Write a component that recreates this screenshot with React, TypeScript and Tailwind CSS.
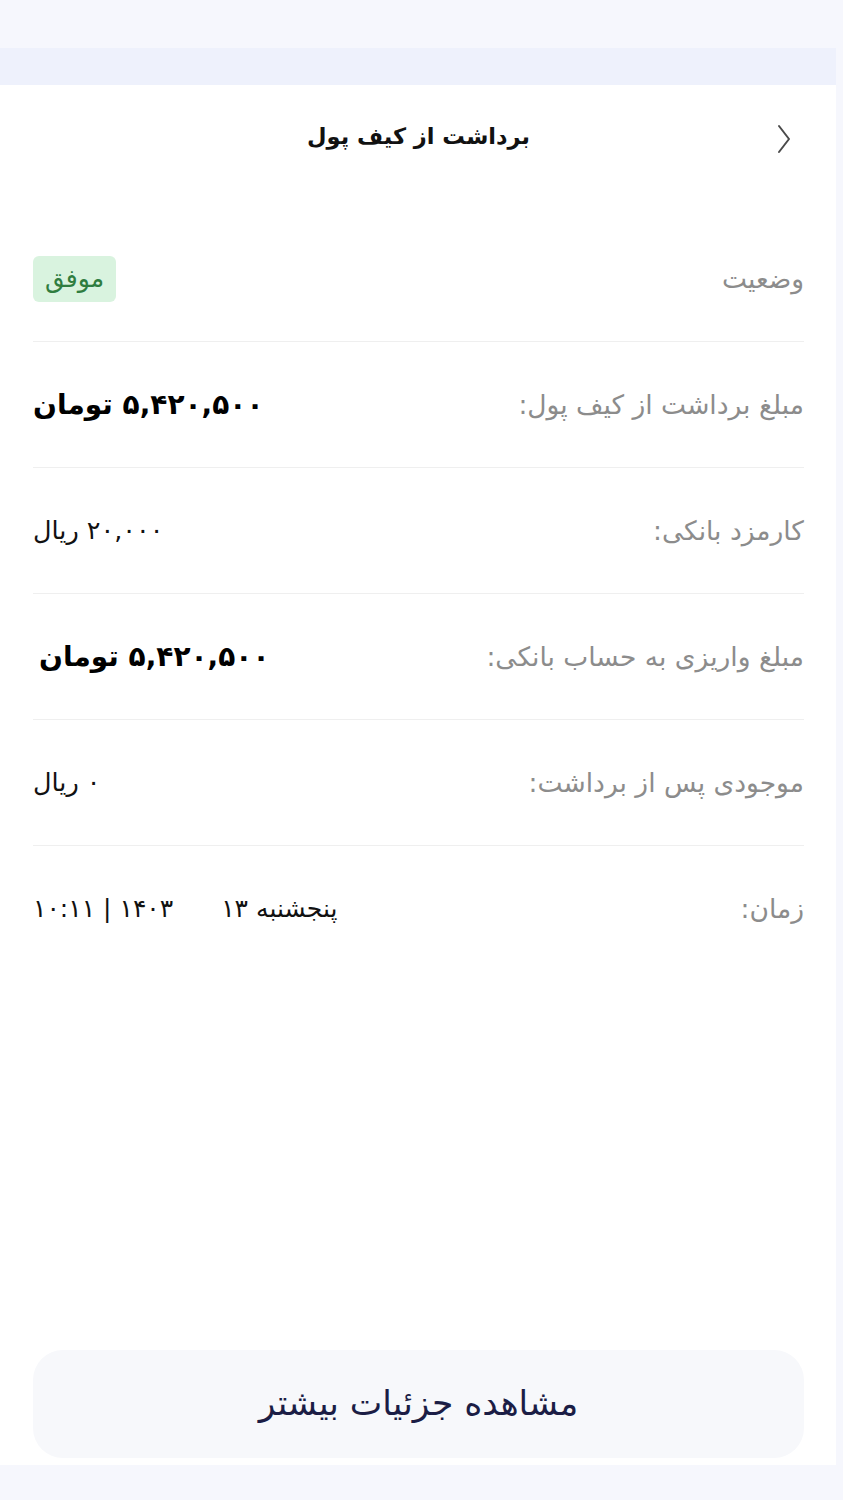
const rows: { label: string; value: React.ReactNode }[] = [
  {
    label: "وضعیت",
    value: (
      <span className="inline-flex items-center justify-center h-[46px] w-[83px] rounded-md bg-[#d9f3df] text-[#2f7d3f] text-[25px]">
        موفق
      </span>
    ),
  },
  {
    label: "مبلغ برداشت از کیف پول:",
    value: <span className="text-[28px] font-bold text-black">۵,۴۲۰,۵۰۰ تومان</span>,
  },
  {
    label: "کارمزد بانکی:",
    value: <span className="text-[25.5px] text-[#111]">۲۰,۰۰۰ ریال</span>,
  },
  {
    label: "مبلغ واریزی به حساب بانکی:",
    value: <span className="text-[28px] font-bold text-black ml-[6px]">۵,۴۲۰,۵۰۰ تومان</span>,
  },
  {
    label: "موجودی پس از برداشت:",
    value: <span className="text-[25.5px] text-[#111]">۰ ریال</span>,
  },
  {
    label: "زمان:",
    value: (
      <span className="text-[25px] text-[#111] flex gap-[48px]">
        <span>پنجشنبه ۱۳</span>
        <span>۱۴۰۳ | ۱۰:۱۱</span>
      </span>
    ),
  },
];

function Chevron() {
  return (
    <svg width="14" height="30" viewBox="0 0 14 30" fill="none" className="absolute right-[13px] top-[39px]">
      <polyline points="2,2 12,15 2,28" stroke="#4a4a4a" strokeWidth="2" strokeLinecap="round" strokeLinejoin="round" />
    </svg>
  );
}

export default function App() {
  return (
    <div
      dir="rtl"
      className="min-h-[1500px] bg-[#f6f7fd] pt-[48px] pb-[35px] pr-[7px]"
      style={{ fontFamily: '"DejaVu Sans", "Noto Sans", sans-serif' }}
    >
      <div className="h-[37px] bg-[#eef1fc]" />
      <div className="bg-white h-[1380px] flex flex-col pl-[33px] pr-[32px]">
        {/* Header */}
        <div className="relative h-[106px] flex items-center justify-center">
          <Chevron />
          <h1 className="text-[22.5px] font-bold text-[#111] mt-[-2px]">برداشت از کیف پول</h1>
        </div>

        {/* Rows */}
        <div className="mt-[25px] flex flex-col">
          {rows.map((r, i) => (
            <div
              key={i}
              className={
                "h-[126px] flex items-center justify-between " +
                (i < rows.length - 1 ? "border-b border-[#efefef]" : "")
              }
            >
              <span className="text-[26.5px] text-[#8c8c8c]">{r.label}</span>
              {r.value}
            </div>
          ))}
        </div>

        <div className="flex-1" />

        <button className="mb-[7px] h-[108px] w-full rounded-[30px] bg-[#f7f8fb] text-[34.5px] text-[#1b1d45]">
          مشاهده جزئیات بیشتر
        </button>
      </div>
    </div>
  );
}
